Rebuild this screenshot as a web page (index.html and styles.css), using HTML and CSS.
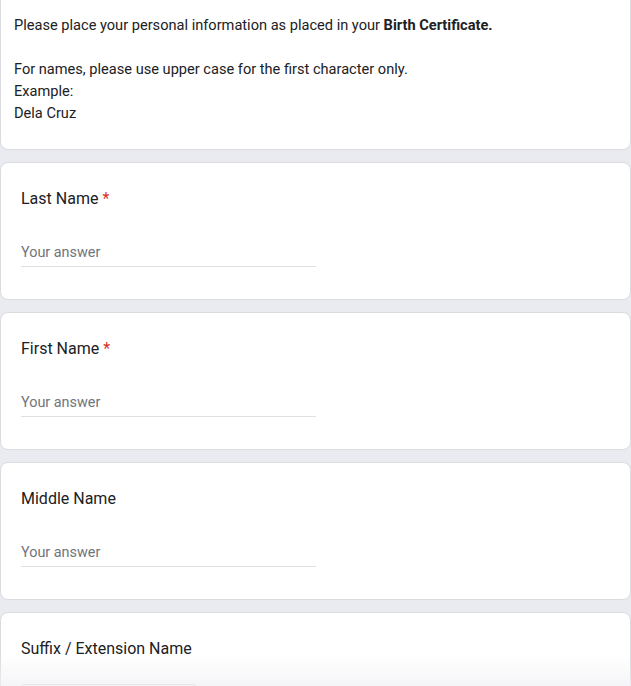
FILE: index.html
```html
<!DOCTYPE html>
<html>
<head>
<meta charset="utf-8">
<link rel="stylesheet" href="styles.css">
</head>
<body>
<div class="form">
  <div class="card intro">
    <p>Please place your personal information as placed in your <b>Birth Certificate.</b></p>
    <p class="blank">&nbsp;</p>
    <p>For names, please use upper case for the first character only.</p>
    <p>Example:</p>
    <p>Dela Cruz</p>
  </div>
  <div class="card question">
    <div class="title">Last Name <span class="req">*</span></div>
    <div class="answer">Your answer</div>
  </div>
  <div class="card question">
    <div class="title">First Name <span class="req">*</span></div>
    <div class="answer">Your answer</div>
  </div>
  <div class="card question">
    <div class="title">Middle Name</div>
    <div class="answer">Your answer</div>
  </div>
  <div class="card question last">
    <div class="title">Suffix / Extension Name</div>
    <div class="select"></div>
  </div>
</div>
<div class="fade"></div>
</body>
</html>
```
FILE: styles.css
```css
html, body {
  margin: 0;
  padding: 0;
}
body {
  background: #e9ebf1;
  font-family: Roboto, "Liberation Sans", Arial, sans-serif;
  color: #202124;
  overflow: hidden;
}
.form {
  display: flex;
  flex-direction: column;
  gap: 12px;
}
.card {
  background: #fff;
  border: 1px solid #dadce0;
  border-radius: 8px;
}
.intro {
  border-top: none;
  border-top-left-radius: 0;
  border-top-right-radius: 0;
  padding: 14px 13px 25px;
  font-size: 14.6px;
  line-height: 22px;
}
.intro p {
  margin: 0;
}
.intro b {
  font-weight: 700;
}
.question {
  padding: 24px 20px 32px;
}
.title {
  font-size: 16px;
  line-height: 24px;
  color: #202124;
}
.req {
  color: #d93025;
}
.answer {
  margin-top: 32px;
  width: 295px;
  font-size: 14.4px;
  line-height: 20px;
  color: #70757a;
  padding-bottom: 3px;
  border-bottom: 1px solid #e0e0e0;
}
.last {
  padding-bottom: 0;
  height: 200px;
}
.select {
  margin-top: 23px;
  width: 174px;
  height: 40px;
  border: 1px solid #d0d2d6;
  border-radius: 4px;
}
.fade {
  position: fixed;
  left: 0;
  right: 0;
  bottom: 0;
  height: 30px;
  background: linear-gradient(to bottom, rgba(245,245,247,0), rgba(240,240,243,0.7));
  pointer-events: none;
}
```
